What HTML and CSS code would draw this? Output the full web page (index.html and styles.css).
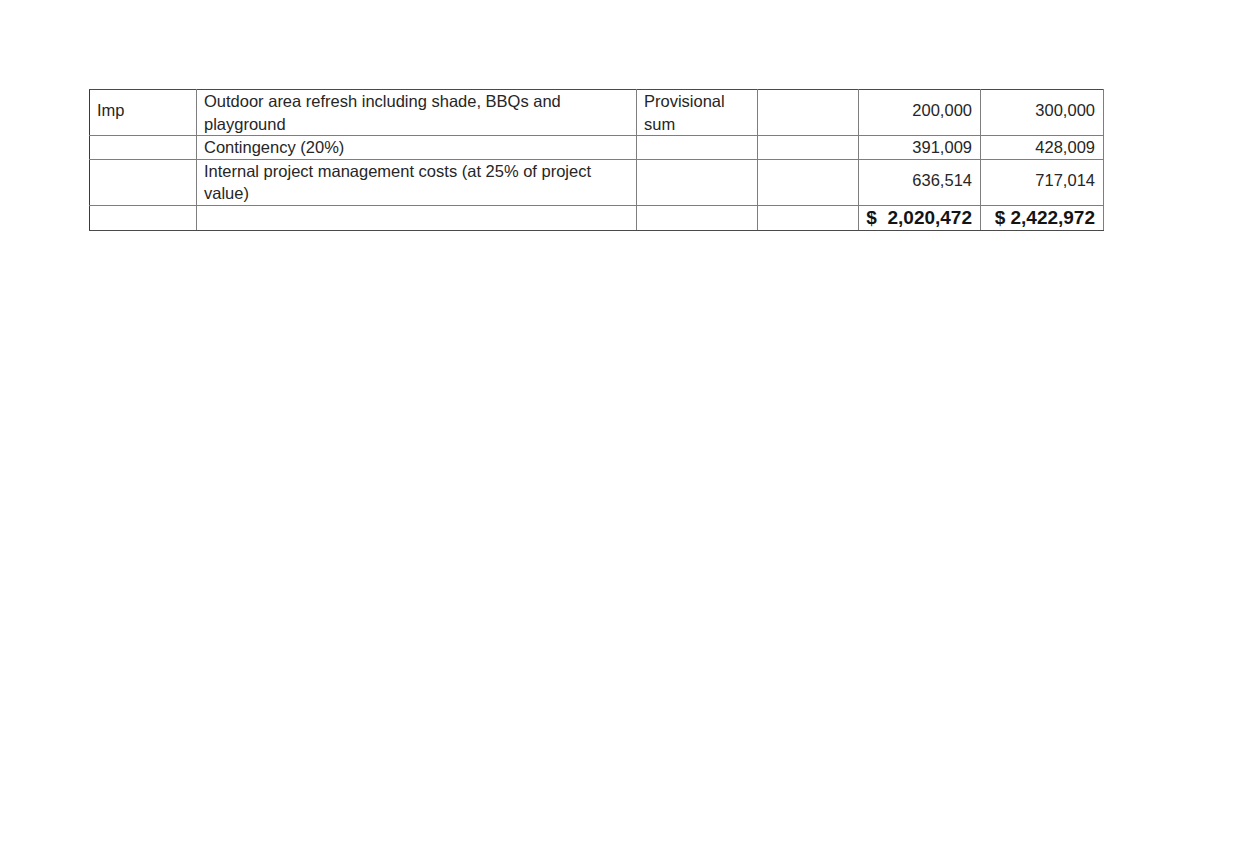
FILE: index.html
```html
<!DOCTYPE html>
<html>
<head>
<meta charset="utf-8">
<link rel="stylesheet" href="styles.css">
</head>
<body>
<table class="cost">
  <colgroup>
    <col class="c1"><col class="c2"><col class="c3"><col class="c4"><col class="c5"><col class="c6">
  </colgroup>
  <tr class="r2">
    <td class="mid">Imp</td>
    <td>Outdoor area refresh including shade, BBQs and playground</td>
    <td>Provisional sum</td>
    <td></td>
    <td class="num">200,000</td>
    <td class="num">300,000</td>
  </tr>
  <tr class="r1">
    <td></td>
    <td>Contingency (20%)</td>
    <td></td>
    <td></td>
    <td class="num">391,009</td>
    <td class="num">428,009</td>
  </tr>
  <tr class="r2">
    <td></td>
    <td>Internal project management costs (at 25% of project value)</td>
    <td></td>
    <td></td>
    <td class="num">636,514</td>
    <td class="num">717,014</td>
  </tr>
  <tr class="total">
    <td></td>
    <td></td>
    <td></td>
    <td></td>
    <td class="num">$&nbsp;&nbsp;2,020,472</td>
    <td class="num">$ 2,422,972</td>
  </tr>
</table>
</body>
</html>
```

FILE: styles.css
```css
html, body {
  margin: 0;
  padding: 0;
  background: #ffffff;
}
body {
  font-family: "Liberation Sans", Arial, sans-serif;
  color: #262626;
}
.cost {
  margin: 89px 0 0 89px;
  border-collapse: collapse;
  table-layout: fixed;
  width: 1015px;
  font-size: 16.5px;
  line-height: 22.5px;
}
.c1 { width: 107px; }
.c2 { width: 440px; }
.c3 { width: 121px; }
.c4 { width: 101px; }
.c5 { width: 122px; }
.c6 { width: 123px; }
.cost td {
  border: 1px solid #7e7e7e;
  padding: 0 7px;
  vertical-align: top;
}
.cost tr:first-child td { border-top-color: #4a4a4a; }
.cost tr td:first-child { border-left-color: #3a3a3a; }
.cost tr:last-child td { border-bottom-color: #4a4a4a; }
.r1 td { height: 22px; }
.r2 td { height: 45px; }
.cost td.mid { vertical-align: middle; }
.cost td.num {
  text-align: right;
  vertical-align: middle;
  padding-right: 8px;
}
.r2 td.mid,
.r2 td.num {
  padding-bottom: 4px;
  height: 41px;
}
.total td {
  height: 24px;
  font-weight: bold;
  font-size: 19px;
  line-height: 23px;
  color: #141414;
}
```
